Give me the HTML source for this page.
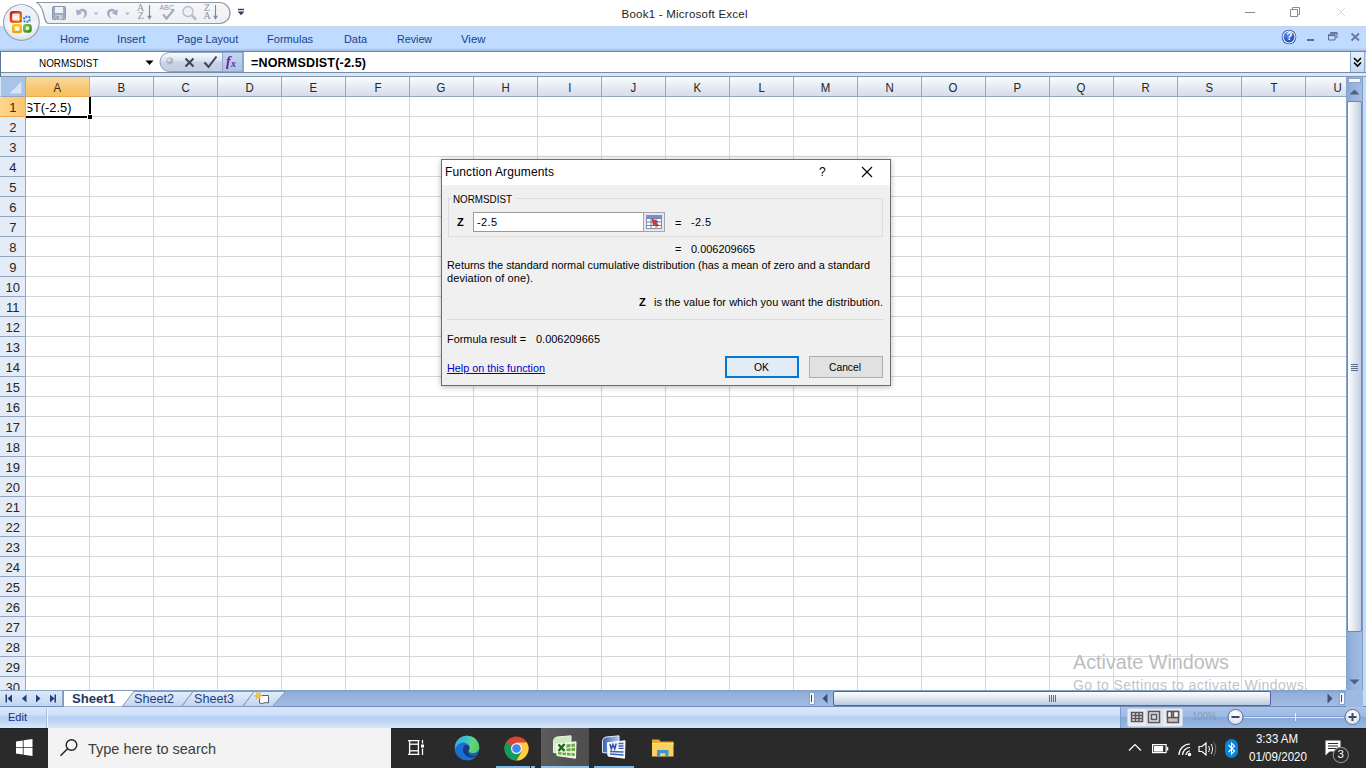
<!DOCTYPE html>
<html><head><meta charset="utf-8"><title>Book1 - Microsoft Excel</title>
<style>
*{box-sizing:border-box;margin:0;padding:0}
html,body{width:1366px;height:768px;overflow:hidden;background:#fff;font-family:"Liberation Sans",sans-serif;}
.a{position:absolute}
.t{position:absolute;white-space:nowrap;line-height:1}
svg{position:absolute;overflow:visible}
#grid{left:0;top:77px;width:1346px;height:613px;background:#fff;overflow:hidden}
.ch{position:absolute;top:0;height:20px;width:64px;background:linear-gradient(#f9fcfd 0%,#e9eff8 40%,#d5dde9 100%);border-right:1px solid #95a6be;border-bottom:1px solid #95a6be}
.rh{position:absolute;left:0;width:26px;height:20px;background:#e4ecf7;border-right:1px solid #95a6be;border-bottom:1px solid #95a6be}
.vl{position:absolute;top:20px;width:1px;height:600px;background:#d5d7dc}
.hl{position:absolute;left:26px;height:1px;width:1320px;background:#d5d7dc}
</style></head><body>

<div class="t " style="left:621.5px;top:8.67px;font-size:11.5px;color:#1e1e1e;letter-spacing:0.237px;">Book1 - Microsoft Excel</div>
<svg style="left:1240px;top:0" width="126" height="26"><path d="M5 12.5h10" stroke="#8a8a8a" stroke-width="1" fill="none"/><path d="M50.5 9.5h7v7h-7zM52.5 9.5v-2h7v7h-2" stroke="#8a8a8a" stroke-width="1" fill="none"/><path d="M96.5 7.5l9 9M105.5 7.5l-9 9" stroke="#dcdcdc" stroke-width="1" fill="none"/></svg>
<svg style="left:0;top:0" width="260" height="52"><defs><linearGradient id="qg" x1="0" y1="0" x2="0" y2="1"><stop offset="0" stop-color="#f6f7f9"/><stop offset="1" stop-color="#eceff4"/></linearGradient><radialGradient id="og" cx="0.5" cy="0.35" r="0.75"><stop offset="0" stop-color="#ffffff"/><stop offset="0.65" stop-color="#f1f4f9"/><stop offset="1" stop-color="#cfd6e2"/></radialGradient></defs><path d="M36 2.5H219.5a10.5 10.5 0 0 1 0 21H49C43.5 23.5 45 14 41.500 8 39.500 4.500 38 2.5 36 2.5z" fill="url(#qg)" stroke="#93979d" stroke-width="1.2"/><path d="M238 9.5h6" stroke="#2b3b55" stroke-width="1.4"/><path d="M237.6 11.6h6.8l-3.4 3.6z" fill="#2b3b55"/></svg>
<svg style="left:50px;top:3px" width="175" height="20"><rect x="2.500" y="3.500" width="13" height="13" rx="1" fill="#9fa9bf" stroke="#8d97ad"/><rect x="5" y="4" width="8" height="6" fill="#eef1f6"/><rect x="5.500" y="12" width="7" height="4.500" fill="#c9cfdb"/><rect x="6.500" y="13" width="2" height="3" fill="#8d97ad"/><path d="M26 6.500l1 6 5.500-2.500-2.500-1c2-1.500 4.500-.5 4.500 2 0 2-1 3.500-3 4.500 3.500-.5 5.500-2.500 5.500-5.500 0-4-5-6-8.500-2.500z" fill="#a3adc2"/><path d="M43.500 9.500h5l-2.500 2.800z" fill="#b4bccb"/><path d="M68 6.500l-1 6-5.500-2.500 2.500-1c-2-1.500-4.500-.5-4.500 2 0 2 1 3.500 3 4.500-3.500-.5-5.500-2.500-5.500-5.500 0-4 5-6 8.500-2.500z" fill="#a3adc2"/><path d="M75 9.500h5l-2.500 2.800z" fill="#b4bccb"/><path d="M99.5 2v13.5" stroke="#7f8899" stroke-width="1.1" fill="none"/><path d="M97.2 12.8l2.3 4 2.3-4z" fill="#7f8899"/><path d="M165.5 2v13.5" stroke="#7f8899" stroke-width="1.1" fill="none"/><path d="M163.2 12.8l2.3 4 2.3-4z" fill="#7f8899"/><path d="M113 11.500l3.500 4 7.500-9" stroke="#a6adba" stroke-width="2.200" fill="none"/><circle cx="138" cy="8.500" r="5" fill="#eef1f7" stroke="#b4bbc8" stroke-width="1.300"/><path d="M142 12.500l4 4" stroke="#b4bbc8" stroke-width="2.500"/></svg>
<div class="t " style="left:136.8px;top:3.09px;font-size:10.5px;color:#8e97a8;font-family:'Liberation Serif',serif;">A</div>
<div class="t " style="left:137.4px;top:11.29px;font-size:10.5px;color:#8e97a8;font-family:'Liberation Serif',serif;">Z</div>
<div class="t " style="left:203.8px;top:3.09px;font-size:10.5px;color:#8e97a8;font-family:'Liberation Serif',serif;">Z</div>
<div class="t " style="left:203.3px;top:11.29px;font-size:10.5px;color:#8e97a8;font-family:'Liberation Serif',serif;">A</div>
<div class="t " style="left:159.5px;top:3.57px;font-size:7px;color:#8e97a8;letter-spacing:0.053px;">ABC</div>
<div class="a" style="left:0px;top:26px;width:1366px;height:25px;background:linear-gradient(#c6d6ea 0,#c2daf8 2px,#bfdbff 4px,#bfdbff 22px,#a9c9ec 24px)"></div>
<div class="a" style="left:0px;top:50px;width:1366px;height:1px;background:#a3bde0"></div>
<div class="t " style="left:59.5px;top:33.97px;font-size:11.5px;color:#15428b;transform-origin:0 50%;transform:scaleX(0.9519);">Home</div>
<div class="t " style="left:117.3px;top:33.97px;font-size:11.5px;color:#15428b;transform-origin:0 50%;transform:scaleX(0.9840);">Insert</div>
<div class="t " style="left:176.6px;top:33.97px;font-size:11.5px;color:#15428b;transform-origin:0 50%;transform:scaleX(0.9476);">Page Layout</div>
<div class="t " style="left:266.5px;top:33.97px;font-size:11.5px;color:#15428b;transform-origin:0 50%;transform:scaleX(0.9619);">Formulas</div>
<div class="t " style="left:343.5px;top:33.97px;font-size:11.5px;color:#15428b;transform-origin:0 50%;transform:scaleX(0.9468);">Data</div>
<div class="t " style="left:396.6px;top:33.97px;font-size:11.5px;color:#15428b;transform-origin:0 50%;transform:scaleX(0.9309);">Review</div>
<div class="t " style="left:460.5px;top:33.97px;font-size:11.5px;color:#15428b;transform-origin:0 50%;transform:scaleX(0.9871);">View</div>
<svg style="left:0;top:0" width="44" height="46"><defs><linearGradient id="lr" x1="0" y1="0" x2="1" y2="1"><stop offset="0" stop-color="#c8141c"/><stop offset="1" stop-color="#f08a18"/></linearGradient><linearGradient id="ly" x1="0" y1="0" x2="0" y2="1"><stop offset="0" stop-color="#f7c62a"/><stop offset="1" stop-color="#eaa416"/></linearGradient><linearGradient id="lg" x1="0" y1="0" x2="1" y2="1"><stop offset="0" stop-color="#7cc042"/><stop offset="1" stop-color="#3c8a1e"/></linearGradient></defs><circle cx="21.4" cy="22.6" r="18.4" fill="#959fae"/><circle cx="21.4" cy="22.4" r="17.3" fill="url(#og)"/><path d="M5 22a16.4 16.4 0 0 1 32.800 0z" fill="#dfe8f3" opacity=".45"/><rect x="11" y="12.2" width="9.8" height="9.5" rx="2" fill="#fdf3ec" stroke="url(#lr)" stroke-width="2.5"/><rect x="24.2" y="16.8" width="5.4" height="5" rx="1.2" fill="#e4eefa" stroke="#2f74c6" stroke-width="1.9" stroke-dasharray="1.9 1.1"/><rect x="13.300" y="25.300" width="7.400" height="6.700" rx="1.200" fill="#fdf6df" stroke="url(#ly)" stroke-width="2.600"/><rect x="24.300" y="25.300" width="6.200" height="6.100" rx="1.600" fill="#e6f3da" stroke="url(#lg)" stroke-width="2.600"/><circle cx="20.800" cy="21.300" r="1.100" fill="#9a5a2a"/></svg>
<svg style="left:1280px;top:28px" width="86" height="22"><defs><radialGradient id="hg" cx="0.4" cy="0.3" r="0.8"><stop offset="0" stop-color="#5b8fe8"/><stop offset="1" stop-color="#1a3fa6"/></radialGradient></defs><circle cx="9" cy="9" r="7.3" fill="#2a4fb0"/><circle cx="9" cy="9" r="6.5" fill="#f2f6fd"/><circle cx="9" cy="9" r="5.400" fill="url(#hg)"/><path d="M27 12h7" stroke="#4f6186" stroke-width="1.800"/><path d="M48.5 7.5h6.500v4.500h-6.500z" fill="none" stroke="#5d6d8d" stroke-width="1"/><path d="M48 7.200h7.500" stroke="#5d6d8d" stroke-width="1.800"/><path d="M50.5 5.500v-.5h6.500v4.500h-1.500" fill="none" stroke="#5d6d8d" stroke-width="1"/><path d="M50 5h7.500" stroke="#5d6d8d" stroke-width="1.500"/><path d="M71.500 5.500l7.500 7M79 5.500l-7.500 7" stroke="#6a7893" stroke-width="1.800"/></svg>
<div class="t " style="left:1286.2px;top:32.33px;font-size:10px;color:#fff;font-weight:bold;">?</div>
<div class="a" style="left:0px;top:51px;width:1366px;height:26px;background:linear-gradient(#c6dbf7 0,#bed7f8 80%,#d5e5fa 100%)"></div>
<div class="a" style="left:0px;top:51px;width:1366px;height:1px;background:#71869c"></div>
<div class="a" style="left:0px;top:72px;width:1366px;height:1px;background:#788b9f"></div>
<div class="a" style="left:0px;top:73px;width:1366px;height:3px;background:#d9e7f7"></div>
<div class="a" style="left:0px;top:76px;width:1366px;height:1px;background:#8296ad"></div>
<div class="a" style="left:1px;top:52px;width:172px;height:20px;background:#fff"></div>
<div class="a" style="left:0px;top:51px;width:1px;height:26px;background:#5d7599"></div>
<div class="t " style="left:39px;top:58.49px;font-size:11px;color:#000;transform-origin:0 50%;transform:scaleX(0.9015);">NORMSDIST</div>
<svg style="left:145px;top:60px" width="10" height="6"><path d="M0.500 0.500h8l-4 4.500z" fill="#000"/></svg>
<svg style="left:156px;top:51px" width="90" height="23"><defs><linearGradient id="cg" x1="0" y1="0" x2="0" y2="1"><stop offset="0" stop-color="#fbfcfe"/><stop offset="0.45" stop-color="#d9e2ef"/><stop offset="0.5" stop-color="#c8d3e4"/><stop offset="1" stop-color="#c3cfe2"/></linearGradient><linearGradient id="fg" x1="0" y1="0" x2="0" y2="1"><stop offset="0" stop-color="#c4d6ef"/><stop offset="1" stop-color="#a9c3e6"/></linearGradient></defs><path d="M13.5 1.5H66.5V20.5H13.5A9.5 9.5 0 0 1 13.5 1.5z" fill="url(#cg)" stroke="#8d9fbc" stroke-width="1"/><circle cx="13.8" cy="9.8" r="3.4" fill="#a9adb8" opacity=".8"/><circle cx="13" cy="9" r="1.6" fill="#e3e7ee"/><path d="M29.5 7.5l8 8M37.5 7.5l-8 8" stroke="#39445a" stroke-width="2" fill="none"/><path d="M48.5 11.5l4 4.500 8-10.500" stroke="#39445a" stroke-width="2" fill="none"/><rect x="66.500" y="1.500" width="20" height="19" fill="url(#fg)" stroke="#8ea9d0"/></svg>
<div class="t " style="left:226px;top:55.38px;font-size:14px;color:#6a1b9a;font-weight:bold;font-family:'Liberation Serif',serif;font-style:italic;">f</div>
<div class="t " style="left:231px;top:59.20px;font-size:10px;color:#6a1b9a;font-weight:bold;font-family:'Liberation Serif',serif;font-style:italic;">x</div>
<div class="a" style="left:244px;top:52px;width:1106px;height:20px;background:#fff"></div>
<div class="a" style="left:243px;top:52px;width:1px;height:20px;background:#8aa8d0"></div>
<div class="t " style="left:251px;top:57.42px;font-size:12.5px;color:#000;letter-spacing:0.189px;font-weight:bold;">=NORMSDIST(-2.5)</div>
<div class="a" style="left:1350px;top:52px;width:15px;height:20px;background:linear-gradient(#e8f0fb,#c5d8f3);border-left:1px solid #8aa8d0;border-right:1px solid #8aa8d0"></div>
<svg style="left:1353px;top:57px" width="9" height="11"><path d="M1 1l3.500 3.500L8 1M1 5.500l3.500 3.500L8 5.500" stroke="#000" stroke-width="1.600" fill="none"/></svg>
<div class="a" id="grid">
<div class="a" style="left:0;top:0;width:26px;height:20px;background:#a9c4e9;border-right:1px solid #95a6be;border-bottom:1px solid #95a6be;border-left:1px solid #dbe7f7"></div>
<svg style="left:9px;top:4px" width="14" height="14"><path d="M12.500 0.500V12.500H0.500z" fill="#d8e4f3"/></svg>
<div class="ch" style="left:26px;background:linear-gradient(#f9d99f,#f8c870 60%,#f5c163);border-color:#f0a848"></div>
<div class="vl" style="left:89px"></div>
<div class="ch" style="left:90px"></div>
<div class="vl" style="left:153px"></div>
<div class="ch" style="left:154px"></div>
<div class="vl" style="left:217px"></div>
<div class="ch" style="left:218px"></div>
<div class="vl" style="left:281px"></div>
<div class="ch" style="left:282px"></div>
<div class="vl" style="left:345px"></div>
<div class="ch" style="left:346px"></div>
<div class="vl" style="left:409px"></div>
<div class="ch" style="left:410px"></div>
<div class="vl" style="left:473px"></div>
<div class="ch" style="left:474px"></div>
<div class="vl" style="left:537px"></div>
<div class="ch" style="left:538px"></div>
<div class="vl" style="left:601px"></div>
<div class="ch" style="left:602px"></div>
<div class="vl" style="left:665px"></div>
<div class="ch" style="left:666px"></div>
<div class="vl" style="left:729px"></div>
<div class="ch" style="left:730px"></div>
<div class="vl" style="left:793px"></div>
<div class="ch" style="left:794px"></div>
<div class="vl" style="left:857px"></div>
<div class="ch" style="left:858px"></div>
<div class="vl" style="left:921px"></div>
<div class="ch" style="left:922px"></div>
<div class="vl" style="left:985px"></div>
<div class="ch" style="left:986px"></div>
<div class="vl" style="left:1049px"></div>
<div class="ch" style="left:1050px"></div>
<div class="vl" style="left:1113px"></div>
<div class="ch" style="left:1114px"></div>
<div class="vl" style="left:1177px"></div>
<div class="ch" style="left:1178px"></div>
<div class="vl" style="left:1241px"></div>
<div class="ch" style="left:1242px"></div>
<div class="vl" style="left:1305px"></div>
<div class="ch" style="left:1306px"></div>
<div class="vl" style="left:1369px"></div>
<div class="rh" style="top:20px;background:linear-gradient(90deg,#ffd58d,#f9c66f);border-color:#f0a848"></div>
<div class="hl" style="top:39px"></div>
<div class="rh" style="top:40px"></div>
<div class="hl" style="top:59px"></div>
<div class="rh" style="top:60px"></div>
<div class="hl" style="top:79px"></div>
<div class="rh" style="top:80px"></div>
<div class="hl" style="top:99px"></div>
<div class="rh" style="top:100px"></div>
<div class="hl" style="top:119px"></div>
<div class="rh" style="top:120px"></div>
<div class="hl" style="top:139px"></div>
<div class="rh" style="top:140px"></div>
<div class="hl" style="top:159px"></div>
<div class="rh" style="top:160px"></div>
<div class="hl" style="top:179px"></div>
<div class="rh" style="top:180px"></div>
<div class="hl" style="top:199px"></div>
<div class="rh" style="top:200px"></div>
<div class="hl" style="top:219px"></div>
<div class="rh" style="top:220px"></div>
<div class="hl" style="top:239px"></div>
<div class="rh" style="top:240px"></div>
<div class="hl" style="top:259px"></div>
<div class="rh" style="top:260px"></div>
<div class="hl" style="top:279px"></div>
<div class="rh" style="top:280px"></div>
<div class="hl" style="top:299px"></div>
<div class="rh" style="top:300px"></div>
<div class="hl" style="top:319px"></div>
<div class="rh" style="top:320px"></div>
<div class="hl" style="top:339px"></div>
<div class="rh" style="top:340px"></div>
<div class="hl" style="top:359px"></div>
<div class="rh" style="top:360px"></div>
<div class="hl" style="top:379px"></div>
<div class="rh" style="top:380px"></div>
<div class="hl" style="top:399px"></div>
<div class="rh" style="top:400px"></div>
<div class="hl" style="top:419px"></div>
<div class="rh" style="top:420px"></div>
<div class="hl" style="top:439px"></div>
<div class="rh" style="top:440px"></div>
<div class="hl" style="top:459px"></div>
<div class="rh" style="top:460px"></div>
<div class="hl" style="top:479px"></div>
<div class="rh" style="top:480px"></div>
<div class="hl" style="top:499px"></div>
<div class="rh" style="top:500px"></div>
<div class="hl" style="top:519px"></div>
<div class="rh" style="top:520px"></div>
<div class="hl" style="top:539px"></div>
<div class="rh" style="top:540px"></div>
<div class="hl" style="top:559px"></div>
<div class="rh" style="top:560px"></div>
<div class="hl" style="top:579px"></div>
<div class="rh" style="top:580px"></div>
<div class="hl" style="top:599px"></div>
<div class="rh" style="top:600px"></div>
<div class="hl" style="top:619px"></div>
<div class="rh" style="top:620px"></div>
<div class="hl" style="top:639px"></div>
</div>
<div class="t " style="left:53.2px;top:80.80px;font-size:13px;color:#3a2a08;transform:scaleX(.88);">A</div>
<div class="t " style="left:117.2px;top:80.80px;font-size:13px;color:#262626;transform:scaleX(.88);">B</div>
<div class="t " style="left:180.8px;top:80.80px;font-size:13px;color:#262626;transform:scaleX(.88);">C</div>
<div class="t " style="left:244.8px;top:80.80px;font-size:13px;color:#262626;transform:scaleX(.88);">D</div>
<div class="t " style="left:309.2px;top:80.80px;font-size:13px;color:#262626;transform:scaleX(.88);">E</div>
<div class="t " style="left:373.5px;top:80.80px;font-size:13px;color:#262626;transform:scaleX(.88);">F</div>
<div class="t " style="left:436.4px;top:80.80px;font-size:13px;color:#262626;transform:scaleX(.88);">G</div>
<div class="t " style="left:500.8px;top:80.80px;font-size:13px;color:#262626;transform:scaleX(.88);">H</div>
<div class="t " style="left:567.7px;top:80.80px;font-size:13px;color:#262626;transform:scaleX(.88);">I</div>
<div class="t " style="left:630.2px;top:80.80px;font-size:13px;color:#262626;transform:scaleX(.88);">J</div>
<div class="t " style="left:693.2px;top:80.80px;font-size:13px;color:#262626;transform:scaleX(.88);">K</div>
<div class="t " style="left:757.9px;top:80.80px;font-size:13px;color:#262626;transform:scaleX(.88);">L</div>
<div class="t " style="left:820.1px;top:80.80px;font-size:13px;color:#262626;transform:scaleX(.88);">M</div>
<div class="t " style="left:884.8px;top:80.80px;font-size:13px;color:#262626;transform:scaleX(.88);">N</div>
<div class="t " style="left:948.4px;top:80.80px;font-size:13px;color:#262626;transform:scaleX(.88);">O</div>
<div class="t " style="left:1013.2px;top:80.80px;font-size:13px;color:#262626;transform:scaleX(.88);">P</div>
<div class="t " style="left:1076.4px;top:80.80px;font-size:13px;color:#262626;transform:scaleX(.88);">Q</div>
<div class="t " style="left:1140.8px;top:80.80px;font-size:13px;color:#262626;transform:scaleX(.88);">R</div>
<div class="t " style="left:1205.2px;top:80.80px;font-size:13px;color:#262626;transform:scaleX(.88);">S</div>
<div class="t " style="left:1269.5px;top:80.80px;font-size:13px;color:#262626;transform:scaleX(.88);">T</div>
<div class="t " style="left:1332.8px;top:80.80px;font-size:13px;color:#262626;transform:scaleX(.88);">U</div>
<div class="t " style="left:9.2px;top:101.00px;font-size:13px;color:#3a2a08;clip-path:inset(-5px -5px 0px -5px);">1</div>
<div class="t " style="left:9.2px;top:121.00px;font-size:13px;color:#262626;clip-path:inset(-5px -5px 0px -5px);">2</div>
<div class="t " style="left:9.2px;top:141.00px;font-size:13px;color:#262626;clip-path:inset(-5px -5px 0px -5px);">3</div>
<div class="t " style="left:9.2px;top:161.00px;font-size:13px;color:#262626;clip-path:inset(-5px -5px 0px -5px);">4</div>
<div class="t " style="left:9.2px;top:181.00px;font-size:13px;color:#262626;clip-path:inset(-5px -5px 0px -5px);">5</div>
<div class="t " style="left:9.2px;top:201.00px;font-size:13px;color:#262626;clip-path:inset(-5px -5px 0px -5px);">6</div>
<div class="t " style="left:9.2px;top:221.00px;font-size:13px;color:#262626;clip-path:inset(-5px -5px 0px -5px);">7</div>
<div class="t " style="left:9.2px;top:241.00px;font-size:13px;color:#262626;clip-path:inset(-5px -5px 0px -5px);">8</div>
<div class="t " style="left:9.2px;top:261.00px;font-size:13px;color:#262626;clip-path:inset(-5px -5px 0px -5px);">9</div>
<div class="t " style="left:5.6px;top:281.00px;font-size:13px;color:#262626;clip-path:inset(-5px -5px 0px -5px);">10</div>
<div class="t " style="left:6.1px;top:301.00px;font-size:13px;color:#262626;clip-path:inset(-5px -5px 0px -5px);">11</div>
<div class="t " style="left:5.6px;top:321.00px;font-size:13px;color:#262626;clip-path:inset(-5px -5px 0px -5px);">12</div>
<div class="t " style="left:5.6px;top:341.00px;font-size:13px;color:#262626;clip-path:inset(-5px -5px 0px -5px);">13</div>
<div class="t " style="left:5.6px;top:361.00px;font-size:13px;color:#262626;clip-path:inset(-5px -5px 0px -5px);">14</div>
<div class="t " style="left:5.6px;top:381.00px;font-size:13px;color:#262626;clip-path:inset(-5px -5px 0px -5px);">15</div>
<div class="t " style="left:5.6px;top:401.00px;font-size:13px;color:#262626;clip-path:inset(-5px -5px 0px -5px);">16</div>
<div class="t " style="left:5.6px;top:421.00px;font-size:13px;color:#262626;clip-path:inset(-5px -5px 0px -5px);">17</div>
<div class="t " style="left:5.6px;top:441.00px;font-size:13px;color:#262626;clip-path:inset(-5px -5px 0px -5px);">18</div>
<div class="t " style="left:5.6px;top:461.00px;font-size:13px;color:#262626;clip-path:inset(-5px -5px 0px -5px);">19</div>
<div class="t " style="left:5.6px;top:481.00px;font-size:13px;color:#262626;clip-path:inset(-5px -5px 0px -5px);">20</div>
<div class="t " style="left:5.6px;top:501.00px;font-size:13px;color:#262626;clip-path:inset(-5px -5px 0px -5px);">21</div>
<div class="t " style="left:5.6px;top:521.00px;font-size:13px;color:#262626;clip-path:inset(-5px -5px 0px -5px);">22</div>
<div class="t " style="left:5.6px;top:541.00px;font-size:13px;color:#262626;clip-path:inset(-5px -5px 0px -5px);">23</div>
<div class="t " style="left:5.6px;top:561.00px;font-size:13px;color:#262626;clip-path:inset(-5px -5px 0px -5px);">24</div>
<div class="t " style="left:5.6px;top:581.00px;font-size:13px;color:#262626;clip-path:inset(-5px -5px 0px -5px);">25</div>
<div class="t " style="left:5.6px;top:601.00px;font-size:13px;color:#262626;clip-path:inset(-5px -5px 0px -5px);">26</div>
<div class="t " style="left:5.6px;top:621.00px;font-size:13px;color:#262626;clip-path:inset(-5px -5px 0px -5px);">27</div>
<div class="t " style="left:5.6px;top:641.00px;font-size:13px;color:#262626;clip-path:inset(-5px -5px 0px -5px);">28</div>
<div class="t " style="left:5.6px;top:661.00px;font-size:13px;color:#262626;clip-path:inset(-5px -5px 0px -5px);">29</div>
<div class="t " style="left:5.6px;top:681.00px;font-size:13px;color:#262626;clip-path:inset(-5px -5px 4px -5px);">30</div>
<div class="t " style="left:24.6px;top:100.80px;font-size:13px;color:#000;clip-path:inset(-2px -2px -4px 2.9px);">S</div>
<div class="t " style="left:33.0px;top:100.80px;font-size:13px;color:#000;transform-origin:0 50%;transform:scaleX(0.9846);">T(-2.5)</div>
<div class="a" style="left:89px;top:97px;width:2px;height:17px;background:#000"></div>
<div class="a" style="left:26px;top:116px;width:62px;height:2px;background:#000"></div>
<div class="a" style="left:87px;top:114px;width:5px;height:5px;background:#000;border-left:1px solid #fff;border-top:1px solid #fff"></div>
<div class="t " style="left:1073px;top:652.07px;font-size:20px;color:#bdbdbd;transform-origin:0 50%;transform:scaleX(0.9884);">Activate Windows</div>
<div class="t " style="left:1073px;top:677.95px;font-size:14px;color:#c4c4c4;letter-spacing:0.412px;clip-path:inset(0 0 2px 0);">Go to Settings to activate Windows.</div>
<div class="a" style="left:1346px;top:77px;width:20px;height:614px;background:#9db9de"></div>
<div class="a" style="left:1346px;top:77px;width:17px;height:614px;background:linear-gradient(90deg,#86a4d1,#97b3dc 35%,#a3bde2)"></div>
<div class="a" style="left:1363px;top:77px;width:3px;height:651px;background:#bfdbff"></div>
<div class="a" style="left:1362px;top:77px;width:1px;height:630px;background:#7d99c4"></div>
<div class="a" style="left:1348px;top:78px;width:13px;height:5px;background:#f4f8fd;border:1px solid #8aa3c6"></div>
<svg style="left:1349px;top:88px" width="12" height="8"><path d="M0.500 6.500l5-5 5 5z" fill="#4d6185"/></svg>
<div class="a" style="left:1347px;top:101px;width:15px;height:531px;background:linear-gradient(90deg,#fdfefe,#e6ebf2 40%,#c3cee0 100%);border:1px solid #6f86b0;border-radius:2px"></div>
<div class="a" style="left:1351px;top:364px;width:7px;height:1px;background:#5b6d8e"></div>
<div class="a" style="left:1351px;top:366px;width:7px;height:1px;background:#5b6d8e"></div>
<div class="a" style="left:1351px;top:368px;width:7px;height:1px;background:#5b6d8e"></div>
<div class="a" style="left:1351px;top:370px;width:7px;height:1px;background:#5b6d8e"></div>
<svg style="left:1349px;top:679px" width="12" height="8"><path d="M0.5 0.5l5 5 5-5z" fill="#4d6185"/></svg>
<div class="a" style="left:0px;top:690px;width:1346px;height:17px;background:linear-gradient(#7f9fcb 0,#93b0da 20%,#a3bee3 100%)"></div>
<div class="a" style="left:0px;top:706px;width:1366px;height:1px;background:#6d8bb8"></div>
<div class="a" style="left:0px;top:690px;width:63px;height:16px;background:linear-gradient(#dce8f8,#c2d6f1);border-top:1px solid #8ea6c8;border-right:1px solid #8ea6c8"></div>
<svg style="left:0;top:690px" width="64" height="17"><g fill="#1f3f7d"><path d="M5.500 4.500h1.500v8h-1.500zM12 4.500v8l-4.500-4z"/><path d="M26.500 4.500v8l-4.500-4z"/><path d="M36 4.500v8l4.500-4z"/><path d="M50 4.500v8l4.500-4zM54.500 4.500h1.500v8h-1.500z"/></g></svg>
<svg style="left:60px;top:690px" width="270" height="17"><defs><linearGradient id="tg" x1="0" y1="0" x2="0" y2="1"><stop offset="0" stop-color="#e4eefb"/><stop offset="1" stop-color="#c0d4f0"/></linearGradient></defs><path d="M182.5 16.5l11.5-15h31.5l-13 15z" fill="url(#tg)" stroke="#8398b8"/><path d="M121.5 16.5l11.5-15h61l-11.5 15z" fill="url(#tg)" stroke="#8398b8"/><path d="M61.5 16.5l11.5-15h60l-11.5 15z" fill="url(#tg)" stroke="#8398b8"/><path d="M3.500 17V0.500H74.500L62 17z" fill="#fff" stroke="#8398b8"/><path d="M4 16.500h58" stroke="#a9b7cc" stroke-width="1"/><g transform="translate(2,0)"><path d="M197.5 5.5h9v7.500q-2.500-1-4.500 0t-4.500 0z" fill="#fff" stroke="#55607a"/><path d="M194.500 1.500l1.800 2.300 2.300-1.800-.8 2.800 2.800 1-2.800.6.400 2.800-2.300-1.800-1.900 1.900.5-2.800-2.800-.5 2.800-1z" fill="#f5c73c" stroke="#d9a21a" stroke-width=".4"/></g></svg>
<div class="t " style="left:72px;top:691.87px;font-size:13.5px;color:#1f3864;transform-origin:0 50%;transform:scaleX(0.9713);font-weight:bold;">Sheet1</div>
<div class="t " style="left:134px;top:691.87px;font-size:13.5px;color:#1f3f7d;transform-origin:0 50%;transform:scaleX(0.9349);">Sheet2</div>
<div class="t " style="left:194px;top:691.87px;font-size:13.5px;color:#1f3f7d;transform-origin:0 50%;transform:scaleX(0.9349);">Sheet3</div>
<div class="a" style="left:809px;top:692px;width:6px;height:13px;background:#f4f8fd;border:1px solid #8aa3c6"></div>
<div class="a" style="left:811px;top:695px;width:1px;height:7px;background:#3b4964"></div>
<svg style="left:821px;top:693px" width="8" height="12"><path d="M6.500 0.500v10l-5-5z" fill="#3c5079"/></svg>
<div class="a" style="left:833px;top:691px;width:438px;height:15px;background:linear-gradient(#fdfefe,#e6ebf2 40%,#bcc8dc 100%);border:1px solid #5a5fae;border-radius:2px"></div>
<div class="a" style="left:1049px;top:695px;width:1px;height:7px;background:#5b6d8e"></div>
<div class="a" style="left:1051px;top:695px;width:1px;height:7px;background:#5b6d8e"></div>
<div class="a" style="left:1053px;top:695px;width:1px;height:7px;background:#5b6d8e"></div>
<div class="a" style="left:1055px;top:695px;width:1px;height:7px;background:#5b6d8e"></div>
<svg style="left:1326px;top:693px" width="8" height="12"><path d="M1.500 0.500v10l5-5z" fill="#3c5079"/></svg>
<div class="a" style="left:1339px;top:692px;width:6px;height:13px;background:#f4f8fd;border:1px solid #8aa3c6"></div>
<div class="a" style="left:1341px;top:695px;width:1px;height:7px;background:#3b4964"></div>
<div class="a" style="left:1346px;top:690px;width:17px;height:17px;background:#9dbae0"></div>
<div class="a" style="left:0px;top:707px;width:1366px;height:21px;background:linear-gradient(#d9e7fa 0,#cfe0f8 35%,#b6d0f4 50%,#c4d9f6 75%,#d9e7fa 100%)"></div>
<div class="a" style="left:46px;top:708px;width:1px;height:20px;background:#a8c1e4"></div>
<div class="a" style="left:47px;top:708px;width:1px;height:20px;background:#eaf2fc"></div>
<div class="t " style="left:7.5px;top:711.97px;font-size:11.5px;color:#15317e;transform-origin:0 50%;transform:scaleX(0.9588);">Edit</div>
<div class="a" style="left:1120px;top:707px;width:246px;height:21px;background:linear-gradient(#a9c3e8 0,#9dbae3 45%,#86a9db 50%,#9bb9e3 100%)"></div>
<div class="a" style="left:1120px;top:707px;width:1px;height:21px;background:#7f9dcb"></div>
<div class="a" style="left:1127px;top:708px;width:56px;height:19px;background:#e6edf7;border-radius:2px;border:1px solid #c5d4ea"></div>
<svg style="left:1127px;top:708px" width="56" height="19"><rect x="18.500" y="1" width="18" height="17" fill="#dbe3ee"/><g fill="none" stroke="#5f5658" stroke-width="1.5"><rect x="4.500" y="4.500" width="11" height="9"/><path d="M4.500 7.500h11M4.500 10.500h11M8.500 4.500v9M12 4.500v9"/><rect x="21.500" y="3.500" width="11" height="11"/><rect x="24.500" y="6.500" width="5" height="5"/><rect x="40.500" y="3.500" width="11" height="11" fill="#c9c0c4"/><path d="M44.500 3.500v6h7" /><rect x="40.500" y="3.500" width="4" height="6" fill="#fff"/><rect x="46.500" y="3.500" width="5" height="6" fill="#fff"/></g></svg>
<div class="t " style="left:1192px;top:711.41px;font-size:10.5px;color:#8299c0;transform-origin:0 50%;transform:scaleX(0.9123);">100%</div>
<svg style="left:1225px;top:707px" width="141" height="21"><defs><radialGradient id="zg" cx="0.5" cy="0.3" r="0.8"><stop offset="0" stop-color="#fff"/><stop offset="1" stop-color="#cfdcee"/></radialGradient></defs><path d="M19 10.500h100" stroke="#d9e6f8" stroke-width="1"/><path d="M19 9.500h100" stroke="#7f9dcb" stroke-width="1"/><path d="M70.500 6v8" stroke="#e8f0fb" stroke-width="1"/><circle cx="10.500" cy="10" r="7.500" fill="url(#zg)" stroke="#5b6e92"/><path d="M6.500 10h8" stroke="#3b4964" stroke-width="2"/><circle cx="127.500" cy="10" r="7.500" fill="url(#zg)" stroke="#5b6e92"/><path d="M123.500 10h8M127.500 6v8" stroke="#3b4964" stroke-width="2"/></svg>
<div class="a" style="left:0px;top:728px;width:1366px;height:40px;background:#2a2a2a;border-top:1px solid #1d222a"></div>
<div class="a" style="left:48px;top:728px;width:343px;height:40px;background:#f3f3f3"></div>
<svg style="left:16px;top:739px" width="17" height="17"><path d="M0 2.400l6.800-.95v6.600H0zM7.600 1.350L16.500 0v8.050H7.600zM0 8.850h6.800v6.600L0 14.500zM7.600 8.850h8.900V17l-8.900-1.250z" fill="#fff"/></svg>
<svg style="left:59px;top:738px" width="20" height="20"><circle cx="12.500" cy="7" r="5.300" fill="none" stroke="#222" stroke-width="1.400"/><path d="M8.600 10.800L1.500 17.800" stroke="#222" stroke-width="1.500"/></svg>
<div class="t " style="left:88px;top:740.60px;font-size:15px;color:#3c3c3c;transform-origin:0 50%;transform:scaleX(0.9655);">Type here to search</div>
<svg style="left:407px;top:739px" width="20" height="18"><g stroke="#fff" fill="none" stroke-width="1.3"><rect x="2.600" y="5.200" width="8.800" height="6.600"/><path d="M1 1.700h11.500M1 15.300h11.500M2.600 1.700v3.500M11.400 1.700v3.500M2.600 11.800v3.500M11.400 11.800v3.500M15.500 1v3.500M15.500 9.500v6.500"/></g><rect x="14" y="5.500" width="3" height="3" fill="#fff"/></svg>
<svg style="left:454px;top:735px" width="26" height="26"><defs><linearGradient id="eg" x1="0" y1="0" x2="0.600" y2="1"><stop offset="0" stop-color="#3cc4ee"/><stop offset="0.500" stop-color="#1c8fe0"/><stop offset="1" stop-color="#1458b8"/></linearGradient><linearGradient id="eg2" x1="0" y1="0" x2="1" y2="0.3"><stop offset="0" stop-color="#2fa9e6"/><stop offset="0.45" stop-color="#3cc3cf"/><stop offset="0.75" stop-color="#5fd67b"/><stop offset="1" stop-color="#57cf68"/></linearGradient></defs><circle cx="13" cy="13" r="12.300" fill="url(#eg)"/><path d="M11 1C18 0 25.300 5 25.300 12.500c0 3.500-3 5.500-6.500 5.500-2.500 0-4-1-4-2.500 0-1 1-1.500 1-3C15.800 9.500 13 7.500 9.500 7.500 6 7.500 3 9.500 1.200 13 1 7 5 2 11 1z" fill="url(#eg2)"/><path d="M9.500 7.500C5 8 1.500 12 1.200 15c1 5 5 9.500 11.800 10.300 4 .3 7.500-1.500 9.500-4-2 1-4 1.500-6.500 1-4-1-7-4-7-8 0-2 1-4 3-5-.8-1-1.500-1.700-2.500-1.800z" fill="#1a6fd0"/><path d="M12 9.300c-2.500 1.500-3.500 4-3 6.500 .6 3.500 4 6.500 8 6.700 2.500 .1 4.500-.7 6-2-1.500 .5-3 .7-4.500 .5-3-.5-4.500-2.500-4.300-4.500 .1-1 1.300-1.700 1.300-3.300 0-1.500-1.500-3.300-3.500-3.900z" fill="#183a80"/></svg>
<svg style="left:504px;top:736px" width="25" height="25"><circle cx="12.500" cy="12.500" r="12" fill="#db4437"/><path d="M12.500 12.500L2.100 6.500A12 12 0 0 0 12.500 24.500l5.200-9z" fill="#0f9d58"/><path d="M12.500 12.500l5.200 3-5.200 9A12 12 0 0 0 22.900 6.500H12.500z" fill="#ffcd40"/><circle cx="12.500" cy="12.500" r="5.500" fill="#f1f1f1"/><circle cx="12.500" cy="12.500" r="4.300" fill="#4285f4"/></svg>
<div class="a" style="left:541px;top:728px;width:48px;height:40px;background:linear-gradient(90deg,#5c5c5c,#525252 60%,#4e4e4e)"></div>
<svg style="left:552px;top:735px" width="26" height="25"><path d="M1.5 5.5Q2 2.5 5 2L19 0.8V19.5L1.5 17.5z" fill="#cfe9bd" stroke="#eaf7e0" stroke-width="1"/><path d="M4 9.2L24 6.800 23.500 23.200 5 20.600z" fill="#e6f5da" stroke="#f7fdf2" stroke-width="1"/><g fill="#6aaa4a"><path d="M14.500 9.500l4-.5v3l-4 .4zM19.500 8.900l3.500-.4v3l-3.500 .4zM14.500 13.500l4-.3v3l-4-.1zM19.500 13.100l3.500-.3v3.200l-3.500-.1zM6 17l3.500 .3v2.500L6 19.400zM10.500 17.400l3.500 .3v2.600l-3.500-.4zM15 17.800l3.500 .2v2.700l-3.500-.4zM19.500 18.100l3.300 .2v2.800l-3.300-.4z"/></g><path d="M6.500 9.500l6 6.500M12.500 9l-6 7" stroke="#1e651e" stroke-width="2.300"/></svg>
<svg style="left:601px;top:735px" width="26" height="25"><defs><linearGradient id="wg" x1="0" y1="0" x2="1" y2="0"><stop offset="0" stop-color="#3560b4"/><stop offset="1" stop-color="#b5c9ee"/></linearGradient></defs><path d="M1.500 5.500Q2 2.500 5 2L18 0.800V19.500L1.500 17.500z" fill="url(#wg)" stroke="#dfe8f8" stroke-width="1"/><path d="M6.500 7.800L24 5.800 23.500 23.200 7 21z" fill="#f3f6fc" stroke="#fff" stroke-width="1"/><path d="M9 9l1.300 5 1.700-4.500 1.700 4.300 1.500-5.300" stroke="#2a4f9e" stroke-width="1.500" fill="none"/><path d="M17.500 8.500h5M17.500 11h5M17.500 13.300h5M9 16.500l13.500 .5M9 19l13.500 1" stroke="#3b63b5" stroke-width="1.300"/></svg>
<svg style="left:651px;top:738px" width="24" height="20"><path d="M1 1.500h7l1.500 2h13v4H1z" fill="#e9a92a"/><path d="M1 5h21.500v13.500H1z" fill="#fbd25f"/><path d="M1 5h21.500v1.200H1z" fill="#fde08a"/><path d="M6 18.500v-6.500h11.500v6.500h-3.300v-3.300h-5v3.300z" fill="#3b95db"/></svg>
<div class="a" style="left:496px;top:766px;width:39px;height:2px;background:#76b9ed"></div>
<div class="a" style="left:530px;top:766px;width:1px;height:2px;background:#2a2a2a"></div>
<div class="a" style="left:541px;top:766px;width:48px;height:2px;background:#8cc4f0"></div>
<div class="a" style="left:594px;top:766px;width:40px;height:2px;background:#76b9ed"></div>
<svg style="left:1125px;top:736px" width="125" height="26"><g fill="none" stroke="#fff" stroke-width="1.200"><path d="M4 14.500l6-6 6 6"/><rect x="27.600" y="8.600" width="13.500" height="8"/><path d="M42.500 11v3.500" stroke-width="1.500"/><rect x="29.500" y="10.500" width="8" height="4.500" fill="#fff"/><path d="M54 19c0-6 5-11 11-11M57.500 19c0-4 3.500-7.500 7.500-7.500M61 19c0-2 2-4 4-4" /><circle cx="64.500" cy="18.500" r="1.200" fill="#fff"/><path d="M74 10.500h3l4-3.500v12l-4-3.500h-3z"/><path d="M83.500 10c1.200 1.500 1.200 4.500 0 6M86 8c2 2.500 2 7.500 0 10" stroke-width="1"/><path d="M88.500 6c3 4 3 10 0 14" stroke="#777" stroke-width="1"/></g><rect x="100" y="3" width="13" height="19" rx="6.500" fill="#0a84d8"/><path d="M103.500 9l6 6-3 3v-11l3 3-6 6" stroke="#fff" stroke-width="1.100" fill="none"/></svg>
<div class="t " style="left:1256px;top:733.14px;font-size:12px;color:#fff;transform-origin:0 50%;transform:scaleX(0.9540);">3:33 AM</div>
<div class="t " style="left:1249px;top:751.04px;font-size:12px;color:#fff;transform-origin:0 50%;transform:scaleX(0.9657);">01/09/2020</div>
<svg style="left:1322px;top:738px" width="30" height="26"><path d="M3.500 2.500h15v11h-11l-4 4z" fill="#fff"/><path d="M6 5.500h10M6 8h10M6 10.500h10" stroke="#2a2a2a" stroke-width="1"/><circle cx="18.8" cy="17" r="7.6" fill="#2a2a2a" stroke="#8a8a8a" stroke-width="1.2"/></svg>
<div class="t " style="left:1337.6px;top:749.47px;font-size:11.5px;color:#fff;">3</div>
<div class="a" style="left:441px;top:159px;width:450px;height:227px;background:#f0f0f0;border:1px solid #6e6e6e;box-shadow:0 1px 6px rgba(0,0,0,.28)"></div>
<div class="a" style="left:442px;top:160px;width:448px;height:25px;background:#fff"></div>
<div class="t " style="left:445px;top:165.54px;font-size:12px;color:#000;letter-spacing:0.134px;">Function Arguments</div>
<div class="t " style="left:819px;top:165.84px;font-size:12px;color:#000;">?</div>
<svg style="left:861px;top:166px" width="12" height="12"><path d="M1 1l10 10M11 1L1 11" stroke="#000" stroke-width="1.100"/></svg>
<div class="a" style="left:448px;top:198px;width:435px;height:39px;border:1px solid #dcdcdc;background:#f0f0f0"></div>
<div class="a" style="left:451px;top:192px;width:64px;height:12px;background:#f0f0f0"></div>
<div class="t " style="left:453px;top:193.69px;font-size:11px;color:#000;transform-origin:0 50%;transform:scaleX(0.8939);">NORMSDIST</div>
<div class="t " style="left:457px;top:216.99px;font-size:11px;color:#000;font-weight:bold;">Z</div>
<div class="a" style="left:473px;top:212px;width:171px;height:20px;background:#fff;border:1px solid #999"></div>
<div class="t " style="left:477px;top:217.49px;font-size:11px;color:#000;letter-spacing:0.348px;">-2.5</div>
<div class="a" style="left:643px;top:212px;width:22px;height:20px;background:#e6e7f0;border:1px solid #a6a6ae"></div>
<svg style="left:645px;top:214px" width="18" height="16"><rect x="1.500" y="1.500" width="15" height="13" fill="#fff" stroke="#8a90a8"/><path d="M1.500 4.500h15M1.500 8h15M1.500 11.500h15M6 1.500v13M11 1.500v13" stroke="#6d7fb5" stroke-width="1"/><path d="M2 2h14v2.500H2z" fill="#7b8fc7"/><path d="M7 5l6 2.500-2 1 2.500 2.500-1.500 1.500L9.500 10l-1 2z" fill="#d83a2e" stroke="#8c1d15" stroke-width=".5"/></svg>
<div class="t " style="left:675px;top:218.09px;font-size:11px;color:#000;">=</div>
<div class="t " style="left:691px;top:217.49px;font-size:11px;color:#000;letter-spacing:0.348px;">-2.5</div>
<div class="t " style="left:675px;top:244.49px;font-size:11px;color:#000;">=</div>
<div class="t " style="left:691px;top:243.99px;font-size:11px;color:#000;transform-origin:0 50%;transform:scaleX(0.9964);">0.006209665</div>
<div class="t " style="left:447px;top:259.69px;font-size:11px;color:#000;transform-origin:0 50%;transform:scaleX(0.9869);">Returns the standard normal cumulative distribution (has a mean of zero and a standard</div>
<div class="t " style="left:447px;top:272.69px;font-size:11px;color:#000;letter-spacing:0.095px;">deviation of one).</div>
<div class="t " style="left:639px;top:296.99px;font-size:11px;color:#000;font-weight:bold;">Z</div>
<div class="t " style="left:654px;top:296.99px;font-size:11px;color:#000;letter-spacing:0.032px;">is the value for which you want the distribution.</div>
<div class="a" style="left:447px;top:319px;width:437px;height:1px;background:#dcdcdc"></div>
<div class="t " style="left:447px;top:333.89px;font-size:11px;color:#000;transform-origin:0 50%;transform:scaleX(0.9903);">Formula result =</div>
<div class="t " style="left:536px;top:333.89px;font-size:11px;color:#000;transform-origin:0 50%;transform:scaleX(0.9964);">0.006209665</div>
<div class="t " style="left:447px;top:362.99px;font-size:11px;color:#0000cc;transform-origin:0 50%;transform:scaleX(0.9832);text-decoration:underline;">Help on this function</div>
<div class="a" style="left:725px;top:356px;width:74px;height:22px;background:#e3ecf5;border:2px solid #0078d7"></div>
<div class="t " style="left:754px;top:361.69px;font-size:11px;color:#000;transform-origin:0 50%;transform:scaleX(0.9438);">OK</div>
<div class="a" style="left:809px;top:356px;width:74px;height:22px;background:#e1e1e1;border:1px solid #adadad"></div>
<div class="t " style="left:829px;top:361.69px;font-size:11px;color:#000;transform-origin:0 50%;transform:scaleX(0.9346);">Cancel</div>
</body></html>
